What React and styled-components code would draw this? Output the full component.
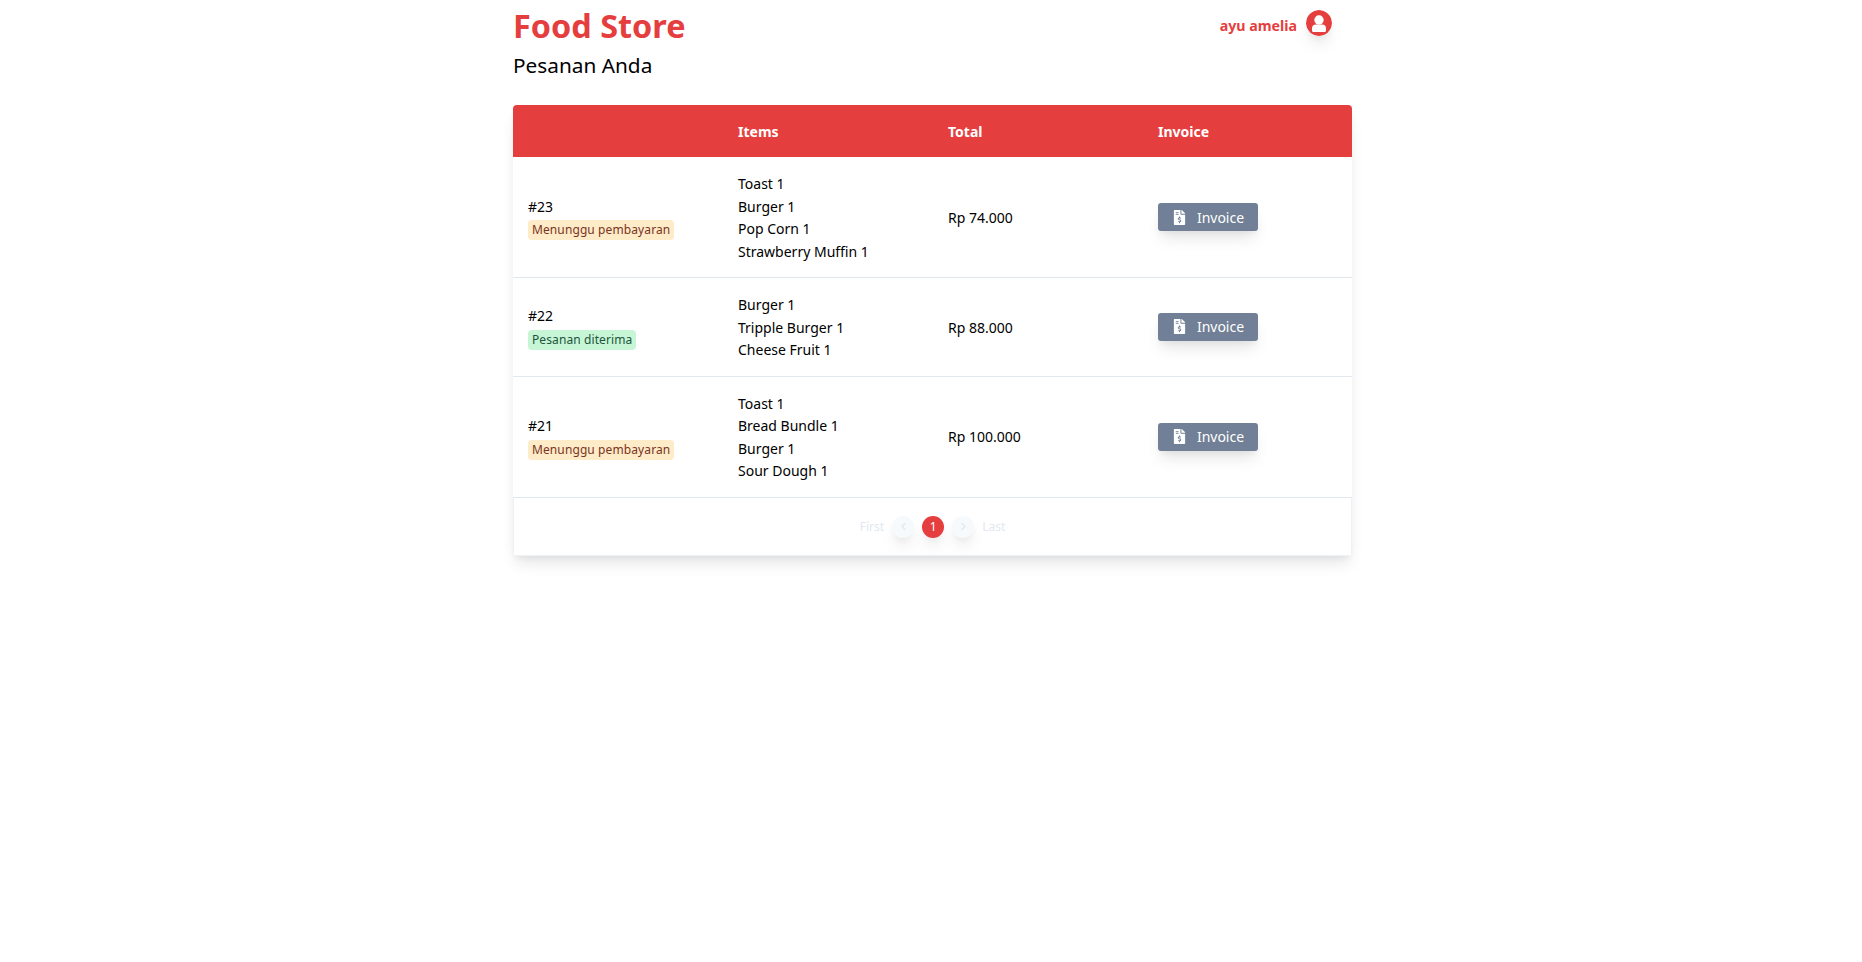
import React from 'react';
import styled, { createGlobalStyle } from 'styled-components';
import { FaFileInvoiceDollar, FaChevronLeft, FaChevronRight } from 'react-icons/fa';

const GlobalStyle = createGlobalStyle`
    * {
        box-sizing: border-box;
    }

    body {
        margin: 0;
        background: white;
        font-family: "Noto Sans", sans-serif;
        color: black;
    }
`;

const Page = styled.div`
    width: 839px;
    margin-left: 513px;
    padding-bottom: 400px;
`;

const Header = styled.header`
    display: flex;
    justify-content: space-between;
    align-items: flex-start;
`;

const Brand = styled.h1`
    margin: 0;
    padding-top: 6px;
    font-size: 32.4px;
    line-height: 39px;
    font-weight: 700;
    color: #e53e3e;
`;

const UserMenu = styled.div`
    display: flex;
    align-items: center;
    gap: 9px;
    padding: 10px 20px 0 0;
`;

const UserName = styled.span`
    padding-top: 4px;
    font-size: 14.2px;
    font-weight: 700;
    color: #e53e3e;
`;

const UserIcon = styled.svg`
    display: block;
    width: 26px;
    height: 26px;
    border-radius: 50%;
    box-shadow: 0 10px 15px -3px rgba(0, 0, 0, 0.1), 0 4px 6px -2px rgba(0, 0, 0, 0.05);
`;

const Title = styled.h2`
    margin: 0;
    padding-top: 5px;
    font-size: 20.8px;
    line-height: 30px;
    font-weight: 400;
`;

const Card = styled.div`
    margin-top: 25px;
    border-radius: 4px;
    overflow: hidden;
    background: white;
    box-shadow: 0 10px 15px -3px rgba(0, 0, 0, 0.1), 0 4px 6px -2px rgba(0, 0, 0, 0.05);
`;

const Table = styled.table`
    width: 100%;
    border-collapse: collapse;
    table-layout: fixed;
    font-size: 14px;
    line-height: 22.5px;
`;

const Column = styled.col`
    width: 210px;
`;

const HeadRow = styled.tr`
    background: #e53e3e;
    color: white;
`;

const HeadCell = styled.th`
    height: 52px;
    padding: 2px 15px 0;
    text-align: left;
    font-weight: 700;
`;

const Row = styled.tr`
    border-bottom: 1px solid #e2e8f0;
`;

const Cell = styled.td`
    padding: 16px 15px 14px;
    vertical-align: middle;
`;

const ActionCell = styled(Cell)`
    padding: 15px;
`;

const Badge = styled.span`
    display: inline-block;
    padding: 0 4px;
    border-radius: 4px;
    font-size: 12px;
    line-height: 20px;
    letter-spacing: 0.1px;
    background: ${props => (props.$done ? '#c6f6d5' : '#feebc8')};
    color: ${props => (props.$done ? '#22543d' : '#7b341e')};
`;

const InvoiceButton = styled.button`
    display: inline-flex;
    align-items: center;
    justify-content: center;
    gap: 10px;
    width: 100px;
    height: 28px;
    border: 0;
    border-radius: 3px;
    background: #718096;
    color: white;
    font-family: inherit;
    font-size: 14px;
    box-shadow: 0 10px 15px -3px rgba(0, 0, 0, 0.1), 0 4px 6px -2px rgba(0, 0, 0, 0.05);

    svg {
        font-size: 15px;
    }
`;

const Pagination = styled.nav`
    display: flex;
    justify-content: center;
    align-items: center;
    gap: 8px;
    height: 58px;
    padding-top: 1px;
    font-size: 12px;
    color: #e2e8f0;
    border: 1px solid #edf2f7;
    border-top: 0;
`;

const PageDot = styled.span`
    display: flex;
    align-items: center;
    justify-content: center;
    width: 22px;
    height: 22px;
    border-radius: 50%;
    font-size: ${props => (props.$active ? '12px' : '9px')};
    background: ${props => (props.$active ? '#e53e3e' : '#f7fafc')};
    color: ${props => (props.$active ? 'white' : '#e2e8f0')};
    box-shadow: 0 10px 15px -3px rgba(0, 0, 0, 0.1), 0 4px 6px -2px rgba(0, 0, 0, 0.05);
`;

const orders = [
    { id: 23, status: 'Menunggu pembayaran', items: ['Toast 1', 'Burger 1', 'Pop Corn 1', 'Strawberry Muffin 1'], total: 'Rp 74.000' },
    { id: 22, status: 'Pesanan diterima', done: true, items: ['Burger 1', 'Tripple Burger 1', 'Cheese Fruit 1'], total: 'Rp 88.000' },
    { id: 21, status: 'Menunggu pembayaran', items: ['Toast 1', 'Bread Bundle 1', 'Burger 1', 'Sour Dough 1'], total: 'Rp 100.000' },
];

const App = () => {

    return (
        <Page>
            <GlobalStyle />
            <Header>
                <Brand>Food Store</Brand>
                <UserMenu>
                    <UserName>ayu amelia</UserName>
                    <UserIcon viewBox="0 0 26 26">
                        <circle cx="13" cy="13" r="13" fill="#e53e3e" />
                        <circle cx="13" cy="10" r="4.7" fill="white" />
                        <path d="M6 20.5v-2a4 4 0 0 1 4-4h6a4 4 0 0 1 4 4v2a1.5 1.5 0 0 1-1.5 1.5h-11a1.5 1.5 0 0 1-1.5-1.5z" fill="white" />
                    </UserIcon>
                </UserMenu>
            </Header>
            <Title>Pesanan Anda</Title>
            <Card>
                <Table>
                    <colgroup>
                        <Column />
                        <Column />
                        <Column />
                        <col />
                    </colgroup>
                    <thead>
                        <HeadRow>
                            <HeadCell />
                            <HeadCell>Items</HeadCell>
                            <HeadCell>Total</HeadCell>
                            <HeadCell>Invoice</HeadCell>
                        </HeadRow>
                    </thead>
                    <tbody>
                        {orders.map(order => (
                            <Row key={order.id}>
                                <Cell>
                                    <div>#{order.id}</div>
                                    <Badge $done={order.done}>{order.status}</Badge>
                                </Cell>
                                <Cell>
                                    {order.items.map(item => <div key={item}>{item}</div>)}
                                </Cell>
                                <Cell>{order.total}</Cell>
                                <ActionCell>
                                    <InvoiceButton><FaFileInvoiceDollar />Invoice</InvoiceButton>
                                </ActionCell>
                            </Row>
                        ))}
                    </tbody>
                </Table>
                <Pagination>
                    <span>First</span>
                    <PageDot><FaChevronLeft /></PageDot>
                    <PageDot $active>1</PageDot>
                    <PageDot><FaChevronRight /></PageDot>
                    <span>Last</span>
                </Pagination>
            </Card>
        </Page>
    )
}

export default App;
